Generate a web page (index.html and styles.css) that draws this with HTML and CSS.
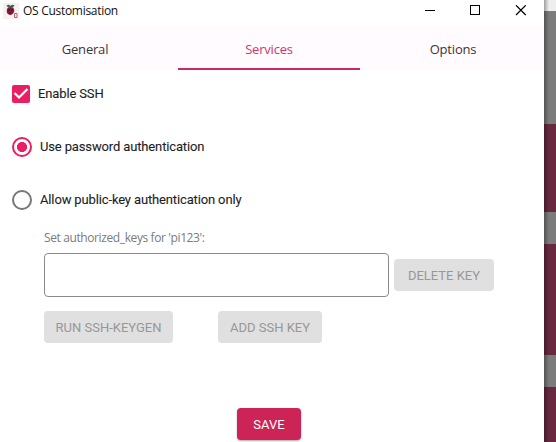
FILE: index.html
```html
<!DOCTYPE html>
<html lang="en">
<head>
<meta charset="utf-8">
<title>OS Customisation</title>
<link rel="stylesheet" href="styles.css">
</head>
<body>
<main class="window">
  <header class="titlebar">
    <svg class="app-icon" width="16" height="16" viewBox="0 0 16 16">
      <rect width="16" height="16" fill="#f5f1f1"/>
      <path d="M3.500 2.500Q6 1 7.500 3Q9 1 11.500 2.500Q10.500 5 7.500 5Q4.500 5 3.500 2.500Z" fill="#386653"/>
      <path d="M4.500 5Q7.500 3.500 10.500 5Q12 7.500 10.500 10Q9 12 7.500 12Q5.500 12 4 10Q3 7 4.500 5Z" fill="#8e1838"/>
      <path d="M5 6h2v2H5zM8 6h2v2H8zM6.500 9h2v2h-2z" fill="#5c1530"/>
      <path d="M11.500 10.500h2.500v4h-2.500z" fill="#f8e8ed" stroke="#c65b79"/>
    </svg>
    <span class="title">OS Customisation</span>
    <svg class="controls" width="106" height="12" viewBox="0 0 106 12" fill="none" stroke="#000">
      <path d="M0 5.500h10M45.500 .5h9v9h-9z" shape-rendering="crispEdges"/>
      <path d="M91 .3l9.700 9.700M100.700 .3L91 10" stroke-width="1.200"/>
    </svg>
  </header>
  <nav class="tabs">
    <div class="tab"><span>General</span></div>
    <div class="tab active"><span>Services</span></div>
    <div class="tab"><span>Options</span></div>
  </nav>
  <section class="options">
    <div class="choice">
      <svg class="check" width="18" height="18" viewBox="0 0 18 18"><rect width="18" height="18" rx="2" fill="#e91e63"/><path d="M2.500 8l4.500 4.500L15.500 4" fill="none" stroke="#fff" stroke-width="2.200"/></svg>
      <span>Enable SSH</span>
    </div>
    <div class="choice"><i class="radio selected"></i><span>Use password authentication</span></div>
    <div class="choice"><i class="radio"></i><span>Allow public-key authentication only</span></div>
  </section>
  <section class="keys">
    <div class="label"><span>Set authorized_keys for 'pi123':</span></div>
    <div class="key-row"><div class="field"></div><div class="button delete">DELETE KEY</div></div>
    <div class="actions"><div class="button run">RUN SSH-KEYGEN</div><div class="button add">ADD SSH KEY</div></div>
  </section>
  <div class="button save">SAVE</div>
</main>
<aside class="backdrop"></aside>
</body>
</html>
```

FILE: styles.css
```css
* { box-sizing: border-box; }
body { margin: 0; width: 556px; height: 442px; overflow: hidden; display: flex; background: #fff; font-family: Roboto, "Liberation Sans", sans-serif; }
.window { width: 544px; height: 442px; overflow: hidden; background: #fff; }
.titlebar { height: 26px; display: flex; align-items: flex-start; padding: 3px 0 0 3px; }
.app-icon { display: block; }
.title { width: 95px; margin-left: 4px; font: 12px/16px "Open Sans", sans-serif; letter-spacing: -.29px; white-space: nowrap; color: #111; }
.controls { margin: 2px 0 0 307px; }
.tabs { height: 44px; margin-left: -6px; display: grid; grid-template-columns: 182px 182px 182px; column-gap: 2px; background: #fffbfe; color: #383539; font: 13px/18px "Open Sans", sans-serif; }
.tab { display: flex; justify-content: center; padding-top: 14px; letter-spacing: -.2px; border-bottom: 2px solid transparent; }
.active { color: #d6336c; border-color: #cf2860; }
.options { padding: 14px 0 0 12px; }
.choice { display: flex; align-items: center; height: 20px; margin-bottom: 33px; font-size: 13px; line-height: 20px; letter-spacing: -.14px; color: #1e1e1e; -webkit-text-stroke: .1px; }
.check { margin-right: 8px; }
.radio { width: 20px; height: 20px; border: 2px solid #777; border-radius: 50%; margin-right: 8px; }
.selected { border-color: #e91e63; background: radial-gradient(circle, #e91e63 4.800px, transparent 5.300px); }
.keys { margin-left: 44px; margin-top: -14px; }
.label { height: 24px; font: 12px/18px "Open Sans", sans-serif; letter-spacing: -.39px; color: #7b7b7b; }
.key-row, .actions { display: flex; align-items: center; }
.field { width: 345px; height: 44px; border: 1px solid #8b8b8b; border-radius: 4px; margin-right: 5px; }
.button { height: 32px; border-radius: 4px; background: #e0e0e0; color: #979797; display: flex; align-items: center; justify-content: center; font-size: 13px; white-space: nowrap; }
.delete { width: 100px; }
.actions { margin-top: 14px; }
.run { width: 129px; }
.add { width: 104px; margin-left: 45px; }
.save { width: 64px; margin: 65px 0 0 237px; background: #cc2456; color: #fff; box-shadow: 0 1px 2px #0005; }
.backdrop { width: 12px; height: 442px; background: linear-gradient(90deg, #0005, transparent 5px), linear-gradient(#eee 11px, #7b7b7b 11px 124px, #682840 124px 212px, #7b7b7b 212px 244px, #682840 244px 355px, #7b7b7b 355px 387px, #682840 387px); }
```
